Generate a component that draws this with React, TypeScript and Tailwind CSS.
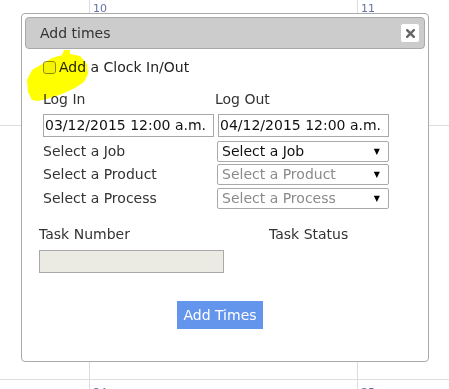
import React from "react"

const font = { fontFamily: '"DejaVu Sans", Verdana, sans-serif' }

function FakeSelect({ text, placeholder }: { text: string; placeholder?: boolean }) {
  return (
    <div className="flex h-[21px] w-[172px] items-center justify-between rounded-[2px] border border-[#a9a9a9] bg-white pl-[4px] pr-[8px]">
      <span className={placeholder ? "text-[#8a8a8a]" : "text-[#111]"}>{text}</span>
      <span className="text-[8px] leading-none text-black">▼</span>
    </div>
  )
}

export default function App() {
  return (
    <div className="relative h-[389px] w-[449px] overflow-hidden bg-white text-[14px] text-[#333]" style={font}>
      {/* Calendar behind the dialog */}
      <div className="grid h-full w-full grid-cols-[90px_268px_1fr] grid-rows-[126px_254px_1fr]">
        <div className="border-r border-b border-[#ddd]" />
        <div className="border-r border-b border-[#ddd] pl-[3px] pt-[2px] text-[11px] leading-[13px] text-[#6670a8]">10</div>
        <div className="border-b border-[#ddd] pl-[3px] pt-[2px] text-[11px] leading-[13px] text-[#6670a8]">11</div>
        <div className="border-r border-b border-[#ddd]" />
        <div className="border-r border-b border-[#ddd]" />
        <div className="border-b border-[#ddd]" />
        <div className="border-r border-[#ddd]" />
        <div className="border-r border-[#ddd] pl-[3px] pt-[6px] text-[11px] leading-[13px] text-[#6670a8]">24</div>
        <div className="pl-[3px] pt-[6px] text-[11px] leading-[13px] text-[#6670a8]">25</div>
      </div>

      {/* Dialog */}
      <div className="absolute left-[21px] top-[13px] h-[349px] w-[408px] rounded-[4px] border border-[#aaa] bg-white p-[3px]">
        <div className="flex h-[32px] items-center justify-between rounded-[4px] border border-[#aaa] bg-[#ccc] pl-[14px] pr-[4px]">
          <span className="text-[#333]">Add times</span>
          <button className="flex h-[20px] w-[20px] items-center justify-center rounded-[3px] border border-[#ccc] bg-white">
            <svg width="9" height="9" viewBox="0 0 9 9">
              <path d="M1.2 1.2 L7.8 7.8 M7.8 1.2 L1.2 7.8" stroke="#666" strokeWidth="2.4" strokeLinecap="square" />
            </svg>
          </button>
        </div>

        <div className="relative pl-[18px]">
          <div className="mt-[8px] flex h-[20px] items-center">
            <span className="h-[13px] w-[13px] rounded-[3px] border border-[#8f8f8f] bg-[#f4f4f4]" />
            <span className="ml-[3px] text-[#222]">Add a Clock In/Out</span>
          </div>

          <div className="mt-[13px] flex h-[18px] items-center">
            <span className="w-[172px]">Log In</span>
            <span>Log Out</span>
          </div>
          <div className="mt-[6px] flex gap-[4px]">
            <div className="flex h-[23px] w-[171px] items-center overflow-hidden whitespace-nowrap border border-[#a9a9a9] pl-[1px] text-[#111]">03/12/2015 12:00 a.m.</div>
            <div className="flex h-[23px] w-[171px] items-center overflow-hidden whitespace-nowrap border border-[#a9a9a9] pl-[1px] text-[#111]">04/12/2015 12:00 a.m.</div>
          </div>

          <div className="mt-[4px] flex items-center">
            <span className="w-[174px]">Select a Job</span>
            <FakeSelect text="Select a Job" />
          </div>
          <div className="mt-[2px] flex items-center">
            <span className="w-[174px]">Select a Product</span>
            <FakeSelect text="Select a Product" placeholder />
          </div>
          <div className="mt-[3px] flex items-center">
            <span className="w-[174px]">Select a Process</span>
            <FakeSelect text="Select a Process" placeholder />
          </div>

          {/* yellow marker scribble */}
          <svg className="pointer-events-none absolute left-0 top-[-9px] mix-blend-multiply" width="66" height="56" viewBox="0 0 66 56">
            <path
              d="M39 2 L45 2 L45 6 L55 8 L62 16 L63 26 L59 34 L50 40 L37 46 L25 50 L13 53 L7 52 L3 44 L2 32 L7 22 L17 16 L27 10 L37 7 Z"
              fill="#ffff00"
            />
          </svg>
        </div>

        <div className="mt-[15px] flex pl-[14px]">
          <span className="w-[230px]">Task Number</span>
          <span>Task Status</span>
        </div>
        <div className="ml-[14px] mt-[5px] h-[23px] w-[185px] border border-[#a9a9a9] bg-[#ebebe4]" />

        <div className="mt-[28px] pl-[152px]">
          <button className="h-[28px] w-[86px] bg-[#6495ed] text-white">Add Times</button>
        </div>
      </div>
    </div>
  )
}
